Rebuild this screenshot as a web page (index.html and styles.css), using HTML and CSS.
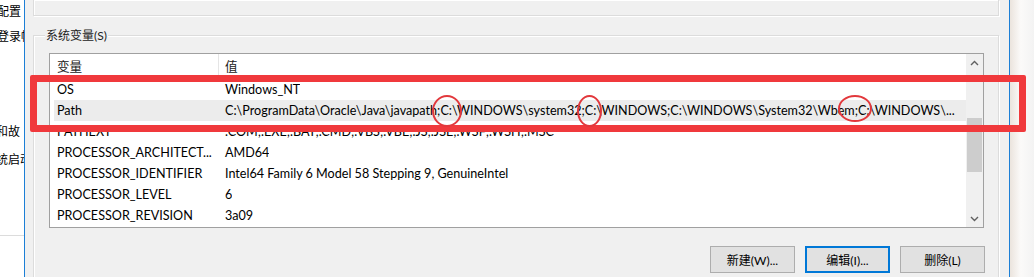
FILE: index.html
```html
<!DOCTYPE html>
<html lang="zh-CN">
<head>
    <meta charset="UTF-8">
    <title>环境变量</title>
    <link rel="stylesheet" href="styles.css">
</head>
<body>
    <div class="screen">
        <!-- 后面的系统属性窗口 -->
        <div class="behind">
            <div class="behind-text t1">用户配置</div>
            <div class="behind-text t2">登录帐</div>
            <div class="behind-text t3">启动和故</div>
            <div class="behind-text t4">系统启动</div>
            <div class="behind-line"></div>
        </div>

        <div class="dialog">
            <div class="group group-top"></div>

            <div class="group group-sys">
                <div class="group-label">系统变量(S)</div>

                <div class="listview">
                    <div class="lv-body">
                        <div class="lv-row lv-header">
                            <div class="col-name">变量</div>
                            <div class="col-value">值</div>
                        </div>
                        <div class="lv-row">
                            <div class="col-name">OS</div>
                            <div class="col-value">Windows_NT</div>
                        </div>
                        <div class="lv-row selected">
                            <div class="col-name">Path</div>
                            <div class="col-value">C:\ProgramData\Oracle\Java\javapath;C:\WINDOWS\system32;C:\WINDOWS;C:\WINDOWS\System32\Wbem;C:\WINDOWS\...</div>
                        </div>
                        <div class="lv-row">
                            <div class="col-name">PATHEXT</div>
                            <div class="col-value">.COM;.EXE;.BAT;.CMD;.VBS;.VBE;.JS;.JSE;.WSF;.WSH;.MSC</div>
                        </div>
                        <div class="lv-row">
                            <div class="col-name">PROCESSOR_ARCHITECT...</div>
                            <div class="col-value">AMD64</div>
                        </div>
                        <div class="lv-row">
                            <div class="col-name">PROCESSOR_IDENTIFIER</div>
                            <div class="col-value">Intel64 Family 6 Model 58 Stepping 9, GenuineIntel</div>
                        </div>
                        <div class="lv-row">
                            <div class="col-name">PROCESSOR_LEVEL</div>
                            <div class="col-value">6</div>
                        </div>
                        <div class="lv-row">
                            <div class="col-name">PROCESSOR_REVISION</div>
                            <div class="col-value">3a09</div>
                        </div>
                    </div>

                    <div class="scrollbar">
                        <div class="sb-arrow">
                            <svg width="9" height="6" viewBox="0 0 9 6"><polyline points="1,5 4.5,1.5 8,5" fill="none" stroke="#606060" stroke-width="1.4"/></svg>
                        </div>
                        <div class="sb-track">
                            <div class="sb-thumb"></div>
                        </div>
                        <div class="sb-arrow">
                            <svg width="9" height="6" viewBox="0 0 9 6"><polyline points="1,1 4.5,4.5 8,1" fill="none" stroke="#606060" stroke-width="1.4"/></svg>
                        </div>
                    </div>
                </div>

                <div class="buttons">
                    <button>新建(W)...</button>
                    <button class="focused">编辑(I)...</button>
                    <button>删除(L)</button>
                </div>
            </div>
        </div>

        <div class="outside"></div>
    </div>

    <!-- 标注 -->
    <div class="mark-box"></div>
    <div class="mark-circle c1"></div>
    <div class="mark-circle c2"></div>
    <div class="mark-circle c3"></div>
</body>
</html>
```

FILE: styles.css
```css
* {
    margin: 0;
    padding: 0;
    box-sizing: border-box;
}

body {
    position: relative;
    width: 1034px;
    height: 277px;
    overflow: hidden;
    background: #fff;
    color: #000;
    font-family: Lato, "Noto Sans CJK SC", sans-serif;
    font-size: 12.6px;
}

.screen {
    display: flex;
    height: 277px;
}

.behind {
    width: 24px;
    flex-shrink: 0;
    background: #fff;
    overflow: hidden;
    font-size: 12px;
}

.behind-text {
    white-space: nowrap;
    height: 16px;
    line-height: 16px;
}

.t1 {
    margin-top: 4px;
    margin-left: -27px;
}

.t2 {
    margin-top: 9px;
    margin-left: -3px;
}

.t3 {
    margin-top: 79px;
    margin-left: -28px;
}

.t4 {
    margin-top: 12px;
    margin-left: -16px;
}

.behind-line {
    margin-top: 67px;
    height: 1px;
    background: #dcdcdc;
}

.dialog {
    width: 986px;
    flex-shrink: 0;
    background: #f0f0f0;
    border-left: 1px solid #1c7fd6;
    border-right: 1px solid #1c7fd6;
    padding: 0 10px 0 8px;
}

.group {
    border: 1px solid #dcdcdc;
    box-shadow: inset 1px 1px 0 #fff, 1px 1px 0 #fff;
}

.group-top {
    height: 16px;
    border-top: none;
}

.group-sys {
    margin-top: 19px;
    height: 242px;
    border-bottom: none;
}

.group-label {
    width: fit-content;
    margin: -9px 0 0 11px;
    padding: 0 1px;
    height: 17px;
    line-height: 17px;
    background: #f0f0f0;
    color: #222;
    font-size: 12px;
}

.listview {
    display: flex;
    margin: 9px 0 0 15px;
    width: 935px;
    height: 175px;
    background: #fff;
    border: 1px solid #a0a0a0;
}

.lv-body {
    flex: 1;
    overflow: hidden;
}

.lv-row {
    display: flex;
    height: 21px;
    line-height: 21px;
    margin-left: 4px;
    white-space: nowrap;
}

.lv-header {
    height: 25px;
    line-height: 25px;
    color: #222;
}

.lv-row.selected {
    background: #ececec;
}

.col-name {
    width: 165px;
    flex-shrink: 0;
    padding-left: 3px;
    overflow: hidden;
}

.lv-header .col-name {
    border-right: 1px solid #e5e5e5;
}

.col-value {
    padding-left: 6px;
    overflow: hidden;
}

.scrollbar {
    width: 17px;
    display: flex;
    flex-direction: column;
    background: #f0f0f0;
}

.sb-arrow {
    height: 17px;
    display: flex;
    align-items: center;
    justify-content: center;
}

.sb-track {
    flex: 1;
}

.sb-thumb {
    margin: 47px 1px 0 1px;
    height: 54px;
    background: #cdcdcd;
}

.buttons {
    display: flex;
    justify-content: flex-end;
    gap: 10px;
    margin: 18px 13px 0 0;
}

button {
    width: 85px;
    height: 27px;
    background: #e1e1e1;
    border: 1px solid #adadad;
    font-family: Lato, "Noto Sans CJK SC", sans-serif;
    font-size: 12px;
    color: #000;
}

button.focused {
    border: 2px solid #0078d7;
}

.outside {
    flex: 1;
    background: linear-gradient(to right, #ebe4dd, #fbfaf9 45%, #f3f3f3);
}

.mark-box {
    position: absolute;
    left: 30px;
    top: 75px;
    width: 996px;
    height: 57px;
    border: 7px solid #f0393c;
    border-radius: 2px;
}

.mark-circle {
    position: absolute;
    border: 2px solid #e2383c;
    border-radius: 50%;
}

.c1 {
    left: 432px;
    top: 95px;
    width: 30px;
    height: 32px;
}

.c2 {
    left: 577px;
    top: 95px;
    width: 25px;
    height: 32px;
}

.c3 {
    left: 838px;
    top: 95px;
    width: 34px;
    height: 27px;
}
```
